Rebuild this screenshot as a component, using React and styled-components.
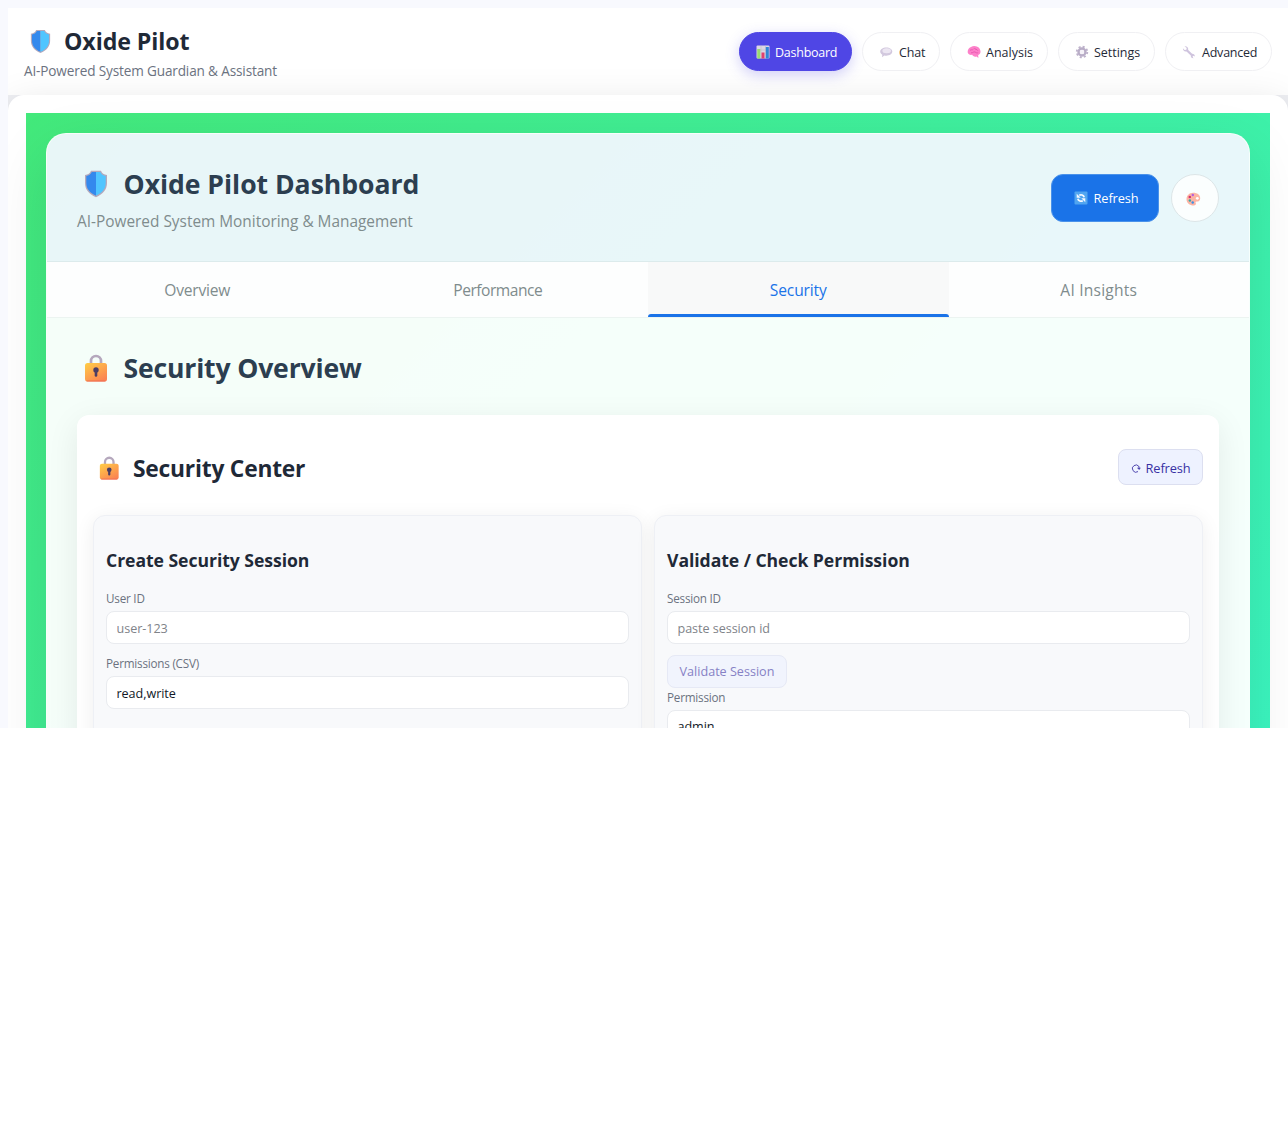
import React from 'react';
import styled, { createGlobalStyle } from 'styled-components';

const GlobalStyle = createGlobalStyle`
  *, *::before, *::after { box-sizing: border-box; }
  body { margin: 0; background: #fff; }
  body, button, input { font-family: 'Open Sans', 'Noto Sans', sans-serif; }
  h1, h2, h3, p { margin: 0; }
`;

const Screen = styled.div`
  padding: 8px 0 0 8px;
  background: #f8f9fe;
`;

const Frame = styled.div`
  height: 720px;
  overflow: hidden;
  background: #eeeff3;
`;

const AppHeader = styled.header`
  display: flex;
  justify-content: space-between;
  height: 87px;
  padding: 16px 16px 0;
  background: #fff;
`;

const Brand = styled.div`
  display: flex;
  flex-direction: column;
  gap: 4px;
`;

const BrandTitle = styled.h1`
  display: flex;
  align-items: center;
  font-size: 23.2px;
  line-height: 34px;
  letter-spacing: -0.1px;
  color: #1f2937;
`;

const BrandIcon = styled.span`
  display: flex;
  width: 40px;
  padding-left: 6px;
`;

const BrandText = styled.p`
  font-size: 13.6px;
  line-height: 17px;
  letter-spacing: -0.15px;
  color: #6b7280;
`;

const Nav = styled.nav`
  display: flex;
  gap: 10px;
  padding-top: 8px;
`;

const NavButton = styled.button`
  display: flex;
  align-items: center;
  gap: ${(p) => p.$gap}px;
  width: ${(p) => p.$width}px;
  height: 39px;
  padding: 1px 0 0 16px;
  border: 1px solid ${(p) => (p.$active ? '#4f46e5' : '#f0f0f3')};
  border-radius: 20px;
  background: ${(p) => (p.$active ? '#4f46e5' : '#fff')};
  color: ${(p) => (p.$active ? '#fff' : '#1f2937')};
  box-shadow: ${(p) => (p.$active ? '0 4px 14px rgba(79, 70, 229, 0.26)' : 'none')};
  font-size: 12.5px;
  font-weight: 500;
  letter-spacing: ${(p) => p.$track}px;
  white-space: nowrap;
  svg { flex: none; }
`;

const Main = styled.main`
  height: 1300px;
  padding: 18px;
  border-radius: 16px;
  background: #fff;
  box-shadow: 0 10px 40px rgba(0, 0, 0, 0.12);
`;

const Backdrop = styled.div`
  height: 1250px;
  padding: 20px;
  background: linear-gradient(135deg, #43e97b 0%, #38f9d7 100%);
`;

const Dashboard = styled.section`
  height: 1210px;
  border: 1px solid rgba(255, 255, 255, 0.2);
  border-radius: 20px;
  overflow: hidden;
  background: rgba(255, 255, 255, 0.95);
  box-shadow: 0 20px 60px rgba(0, 0, 0, 0.1);
`;

const DashHeader = styled.header`
  display: flex;
  justify-content: space-between;
  height: 128px;
  padding: 31px 30px 0;
  border-bottom: 1px solid #dcebec;
  background: rgba(26, 115, 232, 0.06);
`;

const DashHeading = styled.div`
  display: flex;
  flex-direction: column;
  gap: 7px;
`;

const SectionTitle = styled.h2`
  display: flex;
  align-items: center;
  font-size: 26.6px;
  line-height: 39px;
  letter-spacing: ${(p) => p.$track}px;
  color: #2c3e50;
`;

const TitleIcon = styled.span`
  display: flex;
  width: 46.5px;
  padding: 0 0 2px 7px;
`;

const DashText = styled.p`
  font-size: 15.4px;
  line-height: 22px;
  color: #7f8c8d;
`;

const DashActions = styled.div`
  display: flex;
  gap: 12px;
  padding-top: 8.5px;
`;

const PrimaryButton = styled.button`
  display: flex;
  align-items: center;
  gap: 6px;
  width: 108.5px;
  height: 48.5px;
  padding: 0 0 0 22px;
  border: 1px solid #4a92ea;
  border-radius: 12px;
  background: #1a73e8;
  color: #fff;
  font-size: 12.8px;
  font-weight: 500;
  letter-spacing: -0.1px;
`;

const RoundButton = styled.button`
  display: flex;
  align-items: center;
  width: 48px;
  height: 48px;
  padding: 2px 0 0 14px;
  border: 1px solid #dde6e8;
  border-radius: 50%;
  background: #fbfefe;
`;

const Tabs = styled.div`
  display: grid;
  grid-template-columns: repeat(4, 1fr);
  height: 56px;
  border-bottom: 1px solid #ecf4f1;
  background: #fdfefe;
`;

const Tab = styled.button`
  position: relative;
  padding: 1px 0 0;
  border: 0;
  background: ${(p) => (p.$active ? '#f8f9f9' : 'transparent')};
  color: ${(p) => (p.$active ? '#1a73e8' : '#7f8c8d')};
  font-size: 15.6px;
  letter-spacing: ${(p) => p.$track}px;
  &::after {
    content: '';
    display: ${(p) => (p.$active ? 'block' : 'none')};
    position: absolute;
    inset: auto 0 0;
    height: 3px;
    border-radius: 3px 3px 0 0;
    background: #1a73e8;
  }
`;

const Content = styled.div`
  display: flex;
  flex-direction: column;
  gap: 27px;
  padding: 31px 30px 30px;
`;

const Card = styled.section`
  height: 700px;
  padding: 34px 16px 16px;
  border-radius: 12px;
  background: #fff;
  box-shadow: 0 8px 32px rgba(0, 0, 0, 0.08);
`;

const CardHeader = styled.div`
  display: flex;
  align-items: center;
  justify-content: space-between;
  height: 36px;
  margin-bottom: 30px;
`;

const CardTitle = styled.h2`
  display: flex;
  align-items: center;
  padding-top: 3px;
  font-size: 22.8px;
  line-height: 34px;
  letter-spacing: -0.22px;
  color: #1f2937;
`;

const CardIcon = styled.span`
  display: flex;
  width: 40px;
  padding: 0 0 2px 6px;
`;

const SoftButton = styled.button`
  display: flex;
  align-items: center;
  gap: 5px;
  width: 85.5px;
  height: 36px;
  padding: 2px 0 0 12px;
  border: 1px solid #dcdff0;
  border-radius: 8px;
  background: #eef2ff;
  color: #3730a3;
  font-size: 12.8px;
  font-weight: 500;
  letter-spacing: -0.1px;
`;

const PanelGrid = styled.div`
  display: grid;
  grid-template-columns: 1fr 1fr;
  gap: 12px;
`;

const Panel = styled.section`
  display: flex;
  flex-direction: column;
  align-items: flex-start;
  height: 420px;
  padding: 31px 12px 12px;
  border: 1px solid #eef0f5;
  border-radius: 12px;
  background: #f8f9fb;
  box-shadow: 0 4px 20px rgba(0, 0, 0, 0.07);
`;

const PanelTitle = styled.h3`
  margin-bottom: 17px;
  font-size: 17.6px;
  line-height: 26px;
  letter-spacing: -0.05px;
  color: #1f2937;
`;

const Field = styled.label`
  display: flex;
  flex-direction: column;
  gap: 5px;
  width: 100%;
  margin-bottom: 11px;
  font-size: 11.7px;
  line-height: 16px;
  letter-spacing: -0.22px;
  color: #6b7280;
`;

const Input = styled.input`
  width: 100%;
  height: 33px;
  padding: 1px 10px 0 9.5px;
  border: 1px solid #e9ebef;
  border-radius: 8px;
  background: #fff;
  color: #111827;
  font-size: 12.6px;
  letter-spacing: -0.05px;
  &::placeholder { color: #808389; opacity: 1; }
`;

const ValidateButton = styled.button`
  width: 120px;
  height: 33px;
  margin-bottom: 0.5px;
  padding: 0;
  border: 1px solid #e6e9f5;
  border-radius: 8px;
  background: #f1f4fd;
  color: #8681c5;
  font-size: 12.6px;
  font-weight: 500;
`;

const Shield = ({ width, height }) => (
  <svg width={width} height={height} viewBox="0 0 24 28">
    <path d="M7 .8h10c1 2.600 2.800 3.800 6 4.200v8c0 6.300-3.800 11-11 14.200C4.800 24 1 19.300 1 13V5c3.200-.4 5-1.600 6-4.200z" fill="#b3a9bd" />
    <path d="M12 2H7.800C6.600 4.400 4.900 5.600 2.300 6v7c0 5.600 3.300 9.800 9.700 12.800z" fill="#3489ed" />
    <path d="M12 2h4.200c1.200 2.400 2.900 3.600 5.500 4v7c0 5.600-3.300 9.800-9.700 12.800z" fill="#50c5ff" />
  </svg>
);

const Lock = ({ width, height, id }) => (
  <svg width={width} height={height} viewBox="0 0 24 28">
    <defs>
      <linearGradient id={id} x1="0" y1="0" x2=".7" y2="1">
        <stop offset="0" stopColor="#ffce45" />
        <stop offset="1" stopColor="#fb8452" />
      </linearGradient>
    </defs>
    <path d="M7 11V7a5 5 0 0 1 10 0v4" fill="none" stroke="#b5a8bd" strokeWidth="2.700" />
    <rect x="1" y="9" width="22" height="18.500" rx="2.500" fill={`url(#${id})`} />
    <path d="M2.500 27h19" stroke="#ed6656" strokeWidth=".9" />
    <circle cx="12" cy="16" r="2.700" fill="#4b3d63" />
    <path d="M12 16v5.500" stroke="#4b3d63" strokeWidth="2.600" strokeLinecap="round" />
  </svg>
);

const ChartIcon = () => (
  <svg width="14" height="14" viewBox="0 0 14 14">
    <rect x=".5" y=".5" width="13" height="13" rx="1" fill="#dcd6e4" />
    <path d="M5 .5v13M9.500 .5v13M.5 5h13" stroke="#bfb5cb" strokeWidth=".5" />
    <rect x="1.300" y="4" width="3" height="9.500" fill="#98dc70" />
    <rect x="5.500" y="7.500" width="3" height="6" fill="#e0416e" />
    <rect x="9.800" y="2" width="3" height="11.500" fill="#2f86d8" />
  </svg>
);

const ChatIcon = () => (
  <svg width="14" height="14" viewBox="0 0 14 14">
    <path d="M7.300 2.500c3.400 0 6 1.700 6 4.100s-2.600 4.100-6 4.100c-.7 0-1.300 0-1.900-.2L3 12.200l.3-2.500C2 9 1.200 7.900 1.200 6.600c0-2.400 2.700-4.100 6.100-4.100z" fill="#d2c8de" />
    <ellipse cx="7.700" cy="5.700" rx="4.300" ry="2.500" fill="#ece6f2" />
  </svg>
);

const BrainIcon = () => (
  <svg width="14" height="14" viewBox="0 0 14 14">
    <path d="M.7 7.500C.3 4.800 2 2.500 4 1.900 5.800.7 8.300.7 9.800 1.600c2.300.7 3.700 2.900 3.700 5 .1 2-.9 3-2.300 3.500l.2 2.900-1.900-1.500c-2.200.6-3.700-.4-4.300-1.700C3.200 10.200 1.200 9.600.7 7.500z" fill="#fd80c9" />
    <path d="M3 5.500c1.300-1.700 2.300.3 3.500-1.500M7.500 3c.3 2 2.700.8 3.300 2.700M4 7.800c2 .4 2.300-1.500 4-.8s1.500 1.300 3.200.7" fill="none" stroke="#e34fab" strokeWidth=".8" />
  </svg>
);

const GearIcon = () => (
  <svg width="14" height="14" viewBox="0 0 14 14">
    <circle cx="7" cy="7" r="5.300" fill="none" stroke="#beb2cb" strokeWidth="1.800" strokeDasharray="2.080 2.080" />
    <circle cx="7" cy="7" r="3.500" fill="none" stroke="#b9adc7" strokeWidth="2.400" />
    <circle cx="7" cy="7" r="2.100" fill="#f5f1f8" />
  </svg>
);

const WrenchIcon = () => (
  <svg width="14" height="14" viewBox="0 0 14 14">
    <path d="M2.500 1.200 4.700 3 4.300 4.800 2.600 5 .9 3.200c0 2 1.200 3.600 3.600 3.200l4.300 4.100c-.2 1.600.8 2.800 2.700 2.700l-1-1.500.9-1 1.400.7c.1-1.800-1-2.700-2.700-2.600L6.200 4.900c.4-2.200-1.300-4-3.700-3.700z" fill="#cfc4de" />
  </svg>
);

const RefreshTile = () => (
  <svg width="14" height="14" viewBox="0 0 14 14">
    <rect x=".5" y=".5" width="13" height="13" rx="1" fill="#51a5f0" />
    <path d="M5.200 4.300C7 3.200 9.600 3.900 10.200 6.300M8.800 9.700C7 10.800 4.400 10.100 3.800 7.700" fill="none" stroke="#f4f8ff" strokeWidth="1.700" />
    <path d="M2.700 2.700v4h4zM11.300 11.300v-4h-4z" fill="#f4f8ff" />
  </svg>
);

const PaletteIcon = () => (
  <svg width="15" height="14" viewBox="0 0 15 14">
    <path d="M7.200.8c4 0 7 2.200 7 5.400 0 2.300-1.600 3.500-3.400 3.400-1.400 0-1.500.8-1 1.700.5 1-.5 2.200-2 2.200C3.500 13.500.5 10.700.5 7.200S3.300.8 7.200.8z" fill="#fcb4a4" />
    <circle cx="11.300" cy="6.300" r="1.400" fill="#fff" />
    <circle cx="6.800" cy="3" r="1.200" fill="#b25fe0" />
    <circle cx="3.800" cy="5" r="1.300" fill="#d7336b" />
    <circle cx="3.900" cy="8.500" r="1.200" fill="#37a9a6" />
    <circle cx="6.700" cy="10.500" r="1.200" fill="#3c8fe6" />
  </svg>
);

const ReloadGlyph = () => (
  <svg width="10" height="10" viewBox="0 0 10 10">
    <path d="M7 8.600A3.600 3.600 0 1 1 8 3.600" fill="none" stroke="#5048b0" strokeWidth="1" />
    <path d="M5.900 4.700h4L8.200 7z" fill="#5048b0" />
    <path d="M8 3.400v2" stroke="#5048b0" strokeWidth="1" />
  </svg>
);

const NAV = [
  { label: 'Dashboard', icon: ChartIcon, width: 113, gap: 5, track: -0.25, active: true },
  { label: 'Chat', icon: ChatIcon, width: 78, gap: 6, track: -0.2 },
  { label: 'Analysis', icon: BrainIcon, width: 98, gap: 5, track: 0 },
  { label: 'Settings', icon: GearIcon, width: 97, gap: 5, track: -0.03 },
  { label: 'Advanced', icon: WrenchIcon, width: 107, gap: 6, track: -0.22 },
];

const TABS = [
  { label: 'Overview', track: -0.2 },
  { label: 'Performance', track: -0.5 },
  { label: 'Security', track: -0.14, active: true },
  { label: 'AI Insights', track: 0.2 },
];

export default function App() {
  return (
    <Screen>
      <GlobalStyle />
      <Frame>
        <AppHeader>
          <Brand>
            <BrandTitle>
              <BrandIcon><Shield width={21} height={25} /></BrandIcon>
              Oxide Pilot
            </BrandTitle>
            <BrandText>AI-Powered System Guardian &amp; Assistant</BrandText>
          </Brand>
          <Nav>
            {NAV.map(({ label, icon: Icon, width, gap, track, active }) => (
              <NavButton key={label} $width={width} $gap={gap} $track={track} $active={active}>
                <Icon />
                {label}
              </NavButton>
            ))}
          </Nav>
        </AppHeader>
        <Main>
          <Backdrop>
            <Dashboard>
              <DashHeader>
                <DashHeading>
                  <SectionTitle $track={-0.04}>
                    <TitleIcon><Shield width={24} height={28} /></TitleIcon>
                    Oxide Pilot Dashboard
                  </SectionTitle>
                  <DashText>AI-Powered System Monitoring &amp; Management</DashText>
                </DashHeading>
                <DashActions>
                  <PrimaryButton><RefreshTile />Refresh</PrimaryButton>
                  <RoundButton aria-label="Theme"><PaletteIcon /></RoundButton>
                </DashActions>
              </DashHeader>
              <Tabs>
                {TABS.map(({ label, track, active }) => (
                  <Tab key={label} $track={track} $active={active}>{label}</Tab>
                ))}
              </Tabs>
              <Content>
                <SectionTitle $track={-0.18}>
                  <TitleIcon><Lock id="lock-large" width={24} height={28} /></TitleIcon>
                  Security Overview
                </SectionTitle>
                <Card>
                  <CardHeader>
                    <CardTitle>
                      <CardIcon><Lock id="lock-small" width={20.5} height={24} /></CardIcon>
                      Security Center
                    </CardTitle>
                    <SoftButton><ReloadGlyph />Refresh</SoftButton>
                  </CardHeader>
                  <PanelGrid>
                    <Panel>
                      <PanelTitle>Create Security Session</PanelTitle>
                      <Field>User ID<Input placeholder="user-123" /></Field>
                      <Field>Permissions (CSV)<Input defaultValue="read,write" /></Field>
                    </Panel>
                    <Panel>
                      <PanelTitle>Validate / Check Permission</PanelTitle>
                      <Field>Session ID<Input placeholder="paste session id" /></Field>
                      <ValidateButton disabled>Validate Session</ValidateButton>
                      <Field>Permission<Input defaultValue="admin" /></Field>
                    </Panel>
                  </PanelGrid>
                </Card>
              </Content>
            </Dashboard>
          </Backdrop>
        </Main>
      </Frame>
    </Screen>
  );
}
